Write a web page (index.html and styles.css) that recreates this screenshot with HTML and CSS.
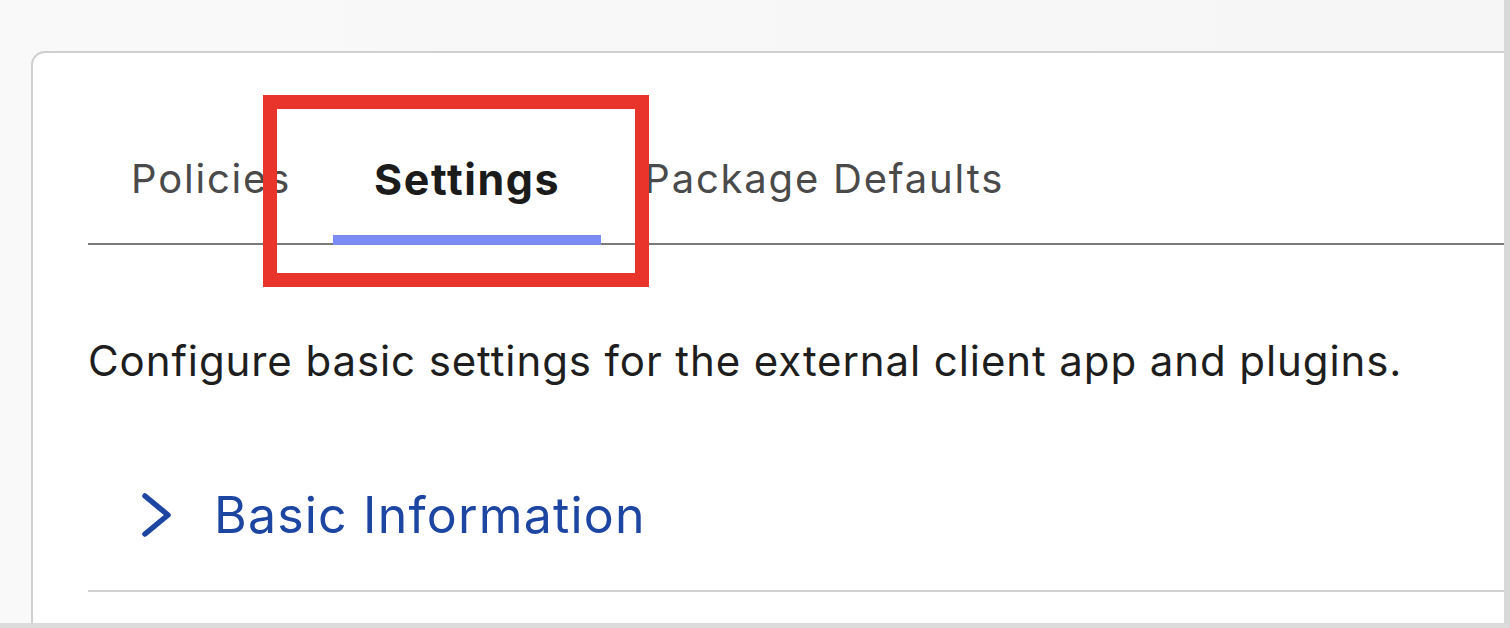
FILE: index.html
```html
<!DOCTYPE html>
<html lang="en">
<head>
	<meta charset="UTF-8">
	<title>Settings</title>
	<link rel="stylesheet" href="styles.css">
</head>
<body>

	<div class="frame">
		<div class="card">
			<ul class="tabs">
				<li class="tab">Policies</li>
				<li class="tab active">Settings</li>
				<li class="tab">Package Defaults</li>
			</ul>

			<p class="desc">Configure basic settings for the external client app and plugins.</p>

			<div class="section">
				<svg class="chev" width="32" height="46" viewBox="0 0 32 46">
					<polyline points="4,4 27,23 4,42" fill="none" stroke="#1d46a2" stroke-width="5.5" stroke-linecap="round" stroke-linejoin="round"/>
				</svg>
				<span class="section-tit">Basic Information</span>
			</div>
		</div><!-- .card -->
	</div><!-- .frame -->

	<div class="mark"></div>

</body>
</html>
```

FILE: styles.css
```css
body{ margin: 0; font-family: Inter, "Liberation Sans", sans-serif; background: #f7f7f7;}
.frame{ box-sizing: border-box; height: 628px; padding: 51px 0 0 31px; overflow: hidden; border-right: 6px solid #d9d9d9; border-bottom: 5px solid #dcdcdc; background: linear-gradient(90deg, #f9f9f9, #f6f6f6);}
.card{ box-sizing: border-box; height: 100%; padding: 0 0 0 55px; background: #fff; border: 2px solid #cfcfcf; border-right: none; border-bottom: none; border-radius: 14px 0 0 0;}

.tabs{ display: flex; margin: 102px 0 0; padding: 0; list-style: none; border-bottom: 2px solid #7a7a7a;}
.tab{ position: relative; padding: 0 42px 40px 43px; font-size: 40px; line-height: 48px; letter-spacing: 1.8px; color: #4a4a4a;}
.tab.active{ padding: 0 41px 40px 41px; font-size: 43px; font-weight: 700; letter-spacing: 1.6px; color: #1b1b1b;}
.tab.active:after{ content: ""; position: absolute; left: 0; right: 0; bottom: -2px; height: 10px; background: #7b8cf4;}

.desc{ margin: 90px 0 0; font-size: 42px; line-height: 52px; letter-spacing: 0.9px; color: #1e1e1e;}

.section{ display: flex; align-items: center; gap: 41px; margin-top: 98px; padding: 0 0 45px 53px; border-bottom: 2px solid #d3d3d3;}
.chev{ display: block;}
.section-tit{ font-size: 50px; line-height: 60px; letter-spacing: 1.2px; color: #1d46a2;}

.mark{ position: absolute; left: 263px; top: 95px; box-sizing: border-box; width: 386px; height: 192px; border: 14px solid #e8342a;}
```
